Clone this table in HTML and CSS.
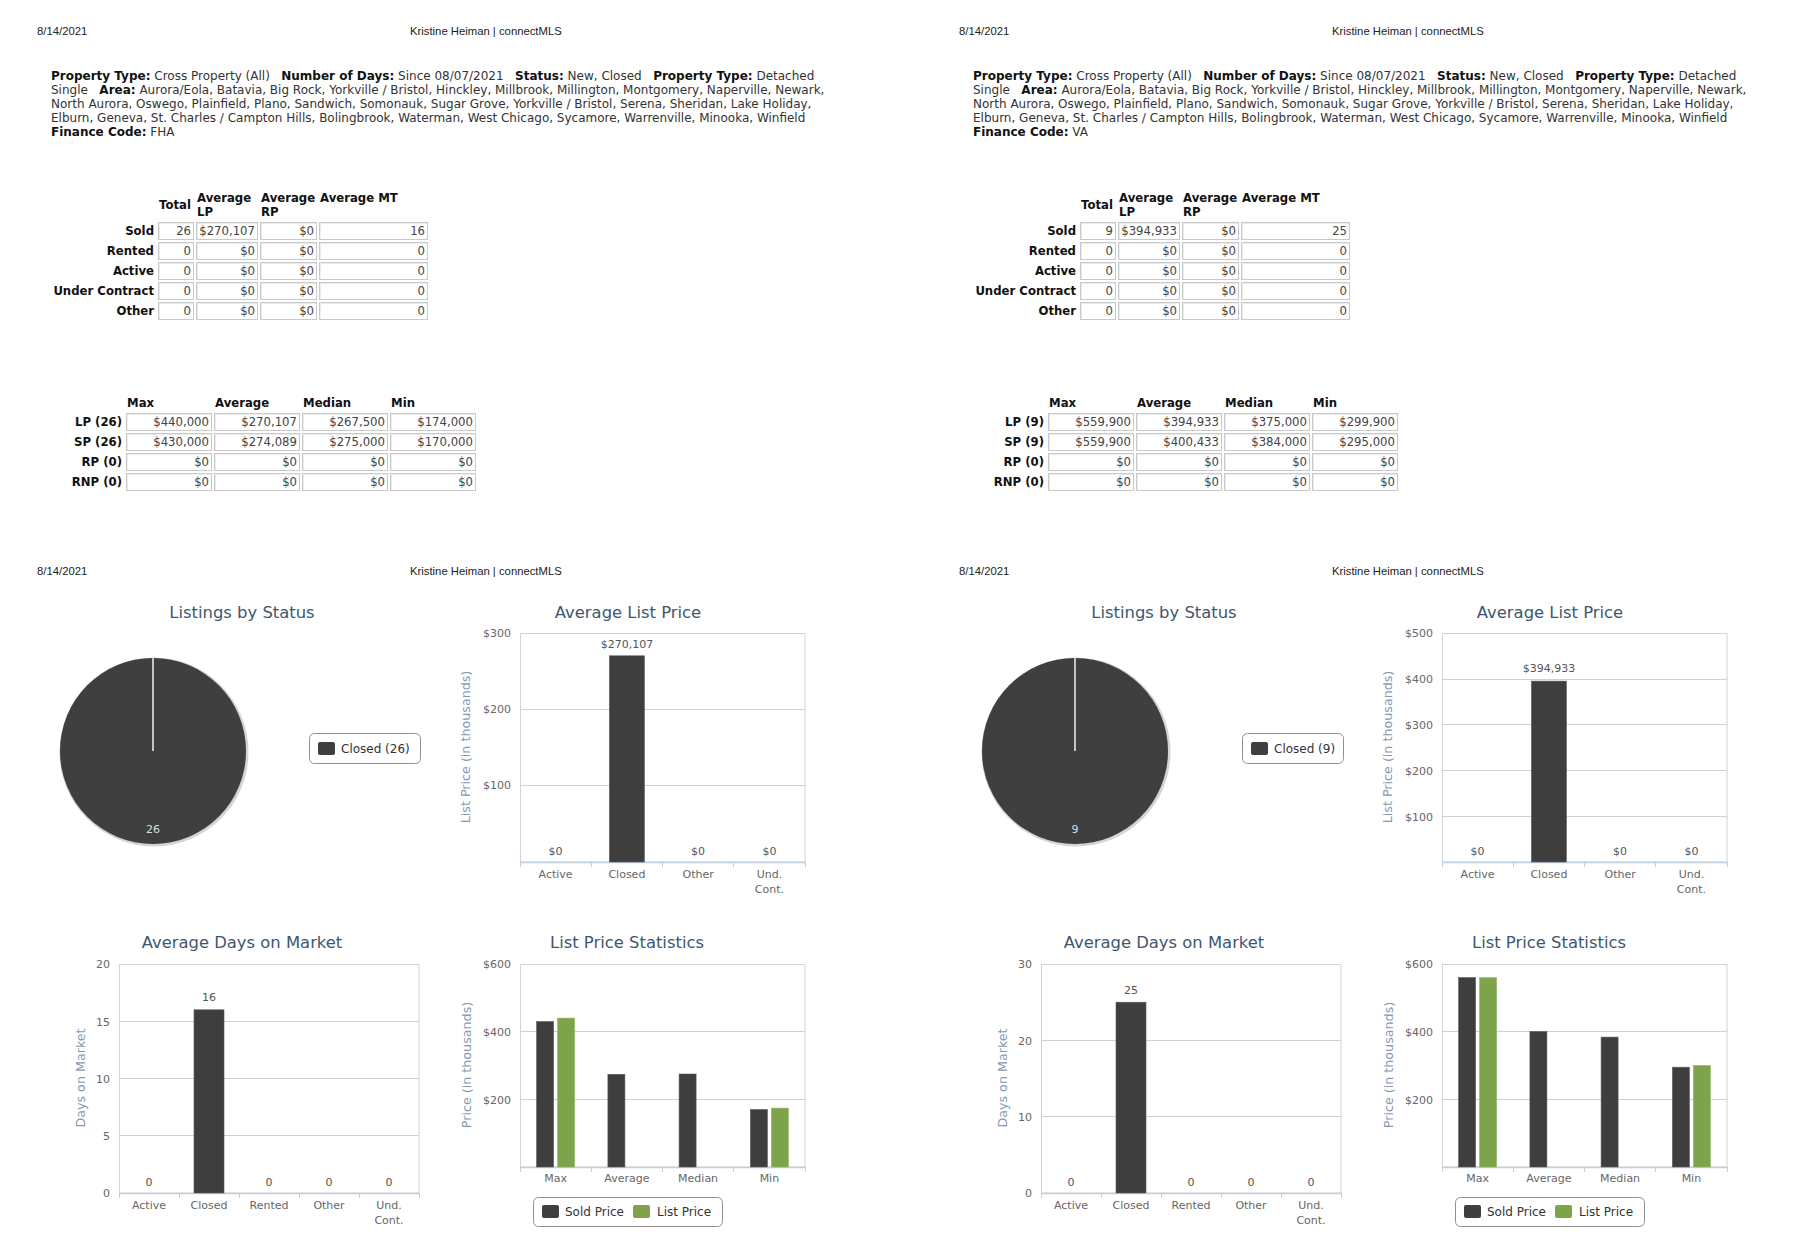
FILE: index.html
```html
<!DOCTYPE html>
<html lang="en">
<head>
<meta charset="utf-8">
<title>connectMLS Market Report</title>
<link rel="stylesheet" href="styles.css">
</head>
<body>
<div class="sheet">

<!-- ============ LEFT : FHA ============ -->
<div class="col">
  <section class="page report">
    <div class="hdr"><span class="date">8/14/2021</span><span class="who">Kristine Heiman | connectMLS</span></div>
    <p class="crit">
      <span class="ln"><b>Property Type:</b> Cross Property (All)&nbsp;&nbsp; <b>Number of Days:</b> Since 08/07/2021&nbsp;&nbsp; <b>Status:</b> New, Closed&nbsp;&nbsp; <b>Property Type:</b> Detached</span>
      <span class="ln">Single&nbsp;&nbsp; <b>Area:</b> Aurora/Eola, Batavia, Big Rock, Yorkville / Bristol, Hinckley, Millbrook, Millington, Montgomery, Naperville, Newark,</span>
      <span class="ln">North Aurora, Oswego, Plainfield, Plano, Sandwich, Somonauk, Sugar Grove, Yorkville / Bristol, Serena, Sheridan, Lake Holiday,</span>
      <span class="ln">Elburn, Geneva, St. Charles / Campton Hills, Bolingbrook, Waterman, West Chicago, Sycamore, Warrenville, Minooka, Winfield</span>
      <span class="ln"><b>Finance Code:</b> FHA</span>
    </p>
    <table class="t1">
      <thead><tr><th class="c-lab"></th><th class="c-tot">Total</th><th class="c-lp">Average LP</th><th class="c-rp">Average RP</th><th class="c-mt">Average MT</th></tr></thead>
      <tbody>
        <tr><th>Sold</th><td>26</td><td>$270,107</td><td>$0</td><td>16</td></tr>
        <tr><th>Rented</th><td>0</td><td>$0</td><td>$0</td><td>0</td></tr>
        <tr><th>Active</th><td>0</td><td>$0</td><td>$0</td><td>0</td></tr>
        <tr><th>Under Contract</th><td>0</td><td>$0</td><td>$0</td><td>0</td></tr>
        <tr><th>Other</th><td>0</td><td>$0</td><td>$0</td><td>0</td></tr>
      </tbody>
    </table>
    <table class="t2">
      <thead><tr><th class="c-lab2"></th><th class="c-p">Max</th><th class="c-p">Average</th><th class="c-p">Median</th><th class="c-p">Min</th></tr></thead>
      <tbody>
        <tr><th>LP (26)</th><td>$440,000</td><td>$270,107</td><td>$267,500</td><td>$174,000</td></tr>
        <tr><th>SP (26)</th><td>$430,000</td><td>$274,089</td><td>$275,000</td><td>$170,000</td></tr>
        <tr><th>RP (0)</th><td>$0</td><td>$0</td><td>$0</td><td>$0</td></tr>
        <tr><th>RNP (0)</th><td>$0</td><td>$0</td><td>$0</td><td>$0</td></tr>
      </tbody>
    </table>
  </section>

  <section class="page charts">
    <div class="hdr"><span class="date">8/14/2021</span><span class="who">Kristine Heiman | connectMLS</span></div>
    <div class="cgrid">
      <!-- Listings by Status -->
      <svg class="chart" width="420" height="330" viewBox="0 0 420 330">
        <text class="ctitle" x="212" y="28">Listings by Status</text>
        <circle class="pieshadow" cx="124" cy="162" r="94.5"/>
        <circle class="pie" cx="123" cy="161" r="93"/>
        <line class="seam" x1="123" y1="68" x2="123" y2="161"/>
        <text class="pielbl" x="123" y="243">26</text>
        <rect class="legend" x="279.5" y="143.5" width="111" height="30" rx="5"/>
        <rect class="sw" x="288" y="152" width="17" height="13" rx="2"/>
        <text class="ltext" x="311" y="163">Closed (26)</text>
      </svg>
      <!-- Average List Price -->
      <svg class="chart" width="420" height="330" viewBox="0 0 420 330">
        <text class="ctitle" x="178" y="28">Average List Price</text>
        <line class="grid" x1="70" y1="119.5" x2="355" y2="119.5"/>
        <line class="grid" x1="70" y1="195.5" x2="355" y2="195.5"/>
        <rect class="pborder" x="70.5" y="43.5" width="284.5" height="228.5"/>
        <line class="xaxis" x1="70" y1="272.5" x2="356" y2="272.5"/>
        <path class="ticks" d="M70.5 272v5M141.5 272v5M212.5 272v5M283.5 272v5M355.5 272v5"/>
        <text class="ylab" x="61" y="47">$300</text>
        <text class="ylab" x="61" y="123">$200</text>
        <text class="ylab" x="61" y="199">$100</text>
        <text class="atitle" transform="translate(20 157) rotate(-90)">List Price (in thousands)</text>
        <rect class="bar" x="159.4" y="65.8" width="35" height="206.2"/>
        <text class="dlab" x="105.6" y="265">$0</text>
        <text class="dlab" x="177" y="58">$270,107</text>
        <text class="dlab" x="248.1" y="265">$0</text>
        <text class="dlab" x="319.4" y="265">$0</text>
        <text class="xlab" x="105.6" y="288">Active</text>
        <text class="xlab" x="176.9" y="288">Closed</text>
        <text class="xlab" x="248.1" y="288">Other</text>
        <text class="xlab" x="319.4" y="288">Und.</text>
        <text class="xlab" x="319.4" y="303">Cont.</text>
      </svg>
      <!-- Average Days on Market -->
      <svg class="chart" width="420" height="330" viewBox="0 0 420 330">
        <text class="ctitle" x="212" y="28">Average Days on Market</text>
        <line class="grid" x1="89" y1="101.5" x2="389" y2="101.5"/>
        <line class="grid" x1="89" y1="158.5" x2="389" y2="158.5"/>
        <line class="grid" x1="89" y1="215.5" x2="389" y2="215.5"/>
        <rect class="pborder" x="89.5" y="44.5" width="299.5" height="228.5"/>
        <line class="xaxis" x1="89" y1="273.5" x2="390" y2="273.5"/>
        <path class="ticks" d="M89.5 273v5M149.5 273v5M209.5 273v5M269.5 273v5M329.5 273v5M389.5 273v5"/>
        <text class="ylab" x="80" y="48">20</text>
        <text class="ylab" x="80" y="105.5">15</text>
        <text class="ylab" x="80" y="162.5">10</text>
        <text class="ylab" x="80" y="219.5">5</text>
        <text class="ylab" x="80" y="277">0</text>
        <text class="atitle" transform="translate(55 158) rotate(-90)">Days on Market</text>
        <rect class="bar" x="164" y="89.8" width="30" height="183.2"/>
        <text class="dlab" x="119" y="266">0</text>
        <text class="dlab" x="179" y="81">16</text>
        <text class="dlab" x="239" y="266">0</text>
        <text class="dlab" x="299" y="266">0</text>
        <text class="dlab" x="359" y="266">0</text>
        <text class="xlab" x="119" y="289">Active</text>
        <text class="xlab" x="179" y="289">Closed</text>
        <text class="xlab" x="239" y="289">Rented</text>
        <text class="xlab" x="299" y="289">Other</text>
        <text class="xlab" x="359" y="289">Und.</text>
        <text class="xlab" x="359" y="304">Cont.</text>
      </svg>
      <!-- List Price Statistics -->
      <svg class="chart" width="420" height="330" viewBox="0 0 420 330">
        <text class="ctitle" x="177" y="28">List Price Statistics</text>
        <line class="grid" x1="70" y1="111.5" x2="355" y2="111.5"/>
        <line class="grid" x1="70" y1="179.5" x2="355" y2="179.5"/>
        <rect class="pborder" x="70.5" y="44.5" width="284.5" height="202.5"/>
        <line class="xaxis" x1="70" y1="247.5" x2="356" y2="247.5"/>
        <path class="ticks" d="M70.5 247v5M141.5 247v5M212.5 247v5M283.5 247v5M355.5 247v5"/>
        <text class="ylab" x="61" y="48">$600</text>
        <text class="ylab" x="61" y="115.5">$400</text>
        <text class="ylab" x="61" y="183.5">$200</text>
        <text class="atitle" transform="translate(21 145) rotate(-90)">Price (in thousands)</text>
        <rect class="bar" x="86.6" y="101.5" width="17" height="145.5"/>
        <rect class="bar green" x="107.6" y="98.1" width="17" height="148.9"/>
        <rect class="bar" x="157.9" y="154.3" width="17" height="92.7"/>
        <rect class="bar" x="229.1" y="154" width="17" height="93"/>
        <rect class="bar" x="300.4" y="189.5" width="17" height="57.5"/>
        <rect class="bar green" x="321.4" y="188.1" width="17" height="58.9"/>
        <text class="xlab" x="105.6" y="262">Max</text>
        <text class="xlab" x="176.9" y="262">Average</text>
        <text class="xlab" x="248.1" y="262">Median</text>
        <text class="xlab" x="319.4" y="262">Min</text>
        <rect class="legend" x="83.5" y="277.5" width="189" height="29" rx="5"/>
        <rect class="sw" x="92" y="285" width="17" height="13" rx="2"/>
        <text class="ltext" x="115" y="296">Sold Price</text>
        <rect class="sw green" x="183" y="285" width="17" height="13" rx="2"/>
        <text class="ltext" x="207" y="296">List Price</text>
      </svg>
    </div>
  </section>
</div>

<!-- ============ RIGHT : VA ============ -->
<div class="col">
  <section class="page report">
    <div class="hdr"><span class="date">8/14/2021</span><span class="who">Kristine Heiman | connectMLS</span></div>
    <p class="crit">
      <span class="ln"><b>Property Type:</b> Cross Property (All)&nbsp;&nbsp; <b>Number of Days:</b> Since 08/07/2021&nbsp;&nbsp; <b>Status:</b> New, Closed&nbsp;&nbsp; <b>Property Type:</b> Detached</span>
      <span class="ln">Single&nbsp;&nbsp; <b>Area:</b> Aurora/Eola, Batavia, Big Rock, Yorkville / Bristol, Hinckley, Millbrook, Millington, Montgomery, Naperville, Newark,</span>
      <span class="ln">North Aurora, Oswego, Plainfield, Plano, Sandwich, Somonauk, Sugar Grove, Yorkville / Bristol, Serena, Sheridan, Lake Holiday,</span>
      <span class="ln">Elburn, Geneva, St. Charles / Campton Hills, Bolingbrook, Waterman, West Chicago, Sycamore, Warrenville, Minooka, Winfield</span>
      <span class="ln"><b>Finance Code:</b> VA</span>
    </p>
    <table class="t1">
      <thead><tr><th class="c-lab"></th><th class="c-tot">Total</th><th class="c-lp">Average LP</th><th class="c-rp">Average RP</th><th class="c-mt">Average MT</th></tr></thead>
      <tbody>
        <tr><th>Sold</th><td>9</td><td>$394,933</td><td>$0</td><td>25</td></tr>
        <tr><th>Rented</th><td>0</td><td>$0</td><td>$0</td><td>0</td></tr>
        <tr><th>Active</th><td>0</td><td>$0</td><td>$0</td><td>0</td></tr>
        <tr><th>Under Contract</th><td>0</td><td>$0</td><td>$0</td><td>0</td></tr>
        <tr><th>Other</th><td>0</td><td>$0</td><td>$0</td><td>0</td></tr>
      </tbody>
    </table>
    <table class="t2">
      <thead><tr><th class="c-lab2"></th><th class="c-p">Max</th><th class="c-p">Average</th><th class="c-p">Median</th><th class="c-p">Min</th></tr></thead>
      <tbody>
        <tr><th>LP (9)</th><td>$559,900</td><td>$394,933</td><td>$375,000</td><td>$299,900</td></tr>
        <tr><th>SP (9)</th><td>$559,900</td><td>$400,433</td><td>$384,000</td><td>$295,000</td></tr>
        <tr><th>RP (0)</th><td>$0</td><td>$0</td><td>$0</td><td>$0</td></tr>
        <tr><th>RNP (0)</th><td>$0</td><td>$0</td><td>$0</td><td>$0</td></tr>
      </tbody>
    </table>
  </section>

  <section class="page charts">
    <div class="hdr"><span class="date">8/14/2021</span><span class="who">Kristine Heiman | connectMLS</span></div>
    <div class="cgrid">
      <!-- Listings by Status -->
      <svg class="chart" width="420" height="330" viewBox="0 0 420 330">
        <text class="ctitle" x="212" y="28">Listings by Status</text>
        <circle class="pieshadow" cx="124" cy="162" r="94.5"/>
        <circle class="pie" cx="123" cy="161" r="93"/>
        <line class="seam" x1="123" y1="68" x2="123" y2="161"/>
        <text class="pielbl" x="123" y="243">9</text>
        <rect class="legend" x="290.5" y="143.5" width="101" height="30" rx="5"/>
        <rect class="sw" x="299" y="152" width="17" height="13" rx="2"/>
        <text class="ltext" x="322" y="163">Closed (9)</text>
      </svg>
      <!-- Average List Price -->
      <svg class="chart" width="420" height="330" viewBox="0 0 420 330">
        <text class="ctitle" x="178" y="28">Average List Price</text>
        <line class="grid" x1="70" y1="89.5" x2="355" y2="89.5"/>
        <line class="grid" x1="70" y1="134.5" x2="355" y2="134.5"/>
        <line class="grid" x1="70" y1="180.5" x2="355" y2="180.5"/>
        <line class="grid" x1="70" y1="226.5" x2="355" y2="226.5"/>
        <rect class="pborder" x="70.5" y="43.5" width="284.5" height="228.5"/>
        <line class="xaxis" x1="70" y1="272.5" x2="356" y2="272.5"/>
        <path class="ticks" d="M70.5 272v5M141.5 272v5M212.5 272v5M283.5 272v5M355.5 272v5"/>
        <text class="ylab" x="61" y="47">$500</text>
        <text class="ylab" x="61" y="93">$400</text>
        <text class="ylab" x="61" y="138.5">$300</text>
        <text class="ylab" x="61" y="184.5">$200</text>
        <text class="ylab" x="61" y="230.5">$100</text>
        <text class="atitle" transform="translate(20 157) rotate(-90)">List Price (in thousands)</text>
        <rect class="bar" x="159.4" y="91.1" width="35" height="180.9"/>
        <text class="dlab" x="105.6" y="265">$0</text>
        <text class="dlab" x="177" y="82">$394,933</text>
        <text class="dlab" x="248.1" y="265">$0</text>
        <text class="dlab" x="319.4" y="265">$0</text>
        <text class="xlab" x="105.6" y="288">Active</text>
        <text class="xlab" x="176.9" y="288">Closed</text>
        <text class="xlab" x="248.1" y="288">Other</text>
        <text class="xlab" x="319.4" y="288">Und.</text>
        <text class="xlab" x="319.4" y="303">Cont.</text>
      </svg>
      <!-- Average Days on Market -->
      <svg class="chart" width="420" height="330" viewBox="0 0 420 330">
        <text class="ctitle" x="212" y="28">Average Days on Market</text>
        <line class="grid" x1="89" y1="120.5" x2="389" y2="120.5"/>
        <line class="grid" x1="89" y1="196.5" x2="389" y2="196.5"/>
        <rect class="pborder" x="89.5" y="44.5" width="299.5" height="228.5"/>
        <line class="xaxis" x1="89" y1="273.5" x2="390" y2="273.5"/>
        <path class="ticks" d="M89.5 273v5M149.5 273v5M209.5 273v5M269.5 273v5M329.5 273v5M389.5 273v5"/>
        <text class="ylab" x="80" y="48">30</text>
        <text class="ylab" x="80" y="124.5">20</text>
        <text class="ylab" x="80" y="200.5">10</text>
        <text class="ylab" x="80" y="277">0</text>
        <text class="atitle" transform="translate(55 158) rotate(-90)">Days on Market</text>
        <rect class="bar" x="164" y="82.2" width="30" height="190.8"/>
        <text class="dlab" x="119" y="266">0</text>
        <text class="dlab" x="179" y="74">25</text>
        <text class="dlab" x="239" y="266">0</text>
        <text class="dlab" x="299" y="266">0</text>
        <text class="dlab" x="359" y="266">0</text>
        <text class="xlab" x="119" y="289">Active</text>
        <text class="xlab" x="179" y="289">Closed</text>
        <text class="xlab" x="239" y="289">Rented</text>
        <text class="xlab" x="299" y="289">Other</text>
        <text class="xlab" x="359" y="289">Und.</text>
        <text class="xlab" x="359" y="304">Cont.</text>
      </svg>
      <!-- List Price Statistics -->
      <svg class="chart" width="420" height="330" viewBox="0 0 420 330">
        <text class="ctitle" x="177" y="28">List Price Statistics</text>
        <line class="grid" x1="70" y1="111.5" x2="355" y2="111.5"/>
        <line class="grid" x1="70" y1="179.5" x2="355" y2="179.5"/>
        <rect class="pborder" x="70.5" y="44.5" width="284.5" height="202.5"/>
        <line class="xaxis" x1="70" y1="247.5" x2="356" y2="247.5"/>
        <path class="ticks" d="M70.5 247v5M141.5 247v5M212.5 247v5M283.5 247v5M355.5 247v5"/>
        <text class="ylab" x="61" y="48">$600</text>
        <text class="ylab" x="61" y="115.5">$400</text>
        <text class="ylab" x="61" y="183.5">$200</text>
        <text class="atitle" transform="translate(21 145) rotate(-90)">Price (in thousands)</text>
        <rect class="bar" x="86.6" y="57.6" width="17" height="189.4"/>
        <rect class="bar green" x="107.6" y="57.6" width="17" height="189.4"/>
        <rect class="bar" x="157.9" y="111.5" width="17" height="135.5"/>
        <rect class="bar" x="229.1" y="117.1" width="17" height="129.9"/>
        <rect class="bar" x="300.4" y="147.2" width="17" height="99.8"/>
        <rect class="bar green" x="321.4" y="145.5" width="17" height="101.5"/>
        <text class="xlab" x="105.6" y="262">Max</text>
        <text class="xlab" x="176.9" y="262">Average</text>
        <text class="xlab" x="248.1" y="262">Median</text>
        <text class="xlab" x="319.4" y="262">Min</text>
        <rect class="legend" x="83.5" y="277.5" width="189" height="29" rx="5"/>
        <rect class="sw" x="92" y="285" width="17" height="13" rx="2"/>
        <text class="ltext" x="115" y="296">Sold Price</text>
        <rect class="sw green" x="183" y="285" width="17" height="13" rx="2"/>
        <text class="ltext" x="207" y="296">List Price</text>
      </svg>
    </div>
  </section>
</div>

</div>
</body>
</html>
```

FILE: styles.css
```css
html, body {
  margin: 0;
  padding: 0;
  background: #ffffff;
}
body {
  width: 1800px;
  height: 1260px;
  overflow: hidden;
  color: #222;
}

.sheet {
  display: grid;
  grid-template-columns: 922px 878px;
}
.col {
  display: flex;
  flex-direction: column;
}
.page {
  box-sizing: border-box;
  padding-top: 24px;
}
.report { height: 540px; }
.charts { height: 720px; }

/* page header */
.hdr {
  display: flex;
  padding-left: 37px;
  height: 14px;
  font: 11.3px/14px "Liberation Sans", Arial, sans-serif;
  color: #222;
}
.hdr .date { width: 373px; }

/* search criteria */
.crit {
  margin: 31px 0 0 51px;
  font: 12px/14px "DejaVu Sans", Verdana, sans-serif;
  color: #333;
}
.crit .ln {
  display: block;
  white-space: nowrap;
}
.crit b { color: #111; }

/* tables */
table {
  border-collapse: separate;
  border-spacing: 2px;
  font: 11.7px "DejaVu Sans", Verdana, sans-serif;
}
.t1 { margin: 49px 0 0 50px; }
.t2 { margin: 71px 0 0 64px; }

th {
  font-weight: bold;
  color: #111;
  padding: 0;
  box-sizing: border-box;
}
thead th {
  text-align: left;
  vertical-align: middle;
  line-height: 14px;
  padding-left: 1px;
}
.t1 thead th { height: 30px; }
.t2 thead th { height: 16px; }
.t1 thead th.c-mt {
  vertical-align: top;
  padding-top: 1px;
}

.c-lab { width: 104px; }
.c-tot { width: 36px; }
.c-lp { width: 62px; }
.c-rp { width: 57px; }
.c-mt { width: 109px; }
.c-lab2 { width: 58px; }
.c-p { width: 86px; }

tbody th {
  text-align: right;
  padding-right: 2px;
  line-height: 16px;
  white-space: nowrap;
}
td {
  box-sizing: border-box;
  height: 18px;
  border: 1px solid #c9c9c9;
  box-shadow: inset 1px 1px 0 #ececec;
  padding: 0 2px;
  text-align: right;
  line-height: 16px;
  color: #444;
  white-space: nowrap;
}

/* charts */
.cgrid {
  display: grid;
  grid-template-columns: 420px 420px;
  grid-template-rows: 330px 330px;
  margin: 12px 0 0 30px;
}
.chart {
  display: block;
  width: 420px;
  height: 330px;
  font-family: "DejaVu Sans", Verdana, sans-serif;
}
.ctitle {
  font-size: 16.4px;
  fill: #3e576f;
  text-anchor: middle;
}
.ylab {
  font-size: 11px;
  fill: #666;
  text-anchor: end;
}
.xlab {
  font-size: 11px;
  fill: #666;
  text-anchor: middle;
}
.dlab {
  font-size: 11px;
  fill: #555;
  text-anchor: middle;
}
.atitle {
  font-size: 12.7px;
  fill: #8499b2;
  text-anchor: middle;
}
.grid {
  stroke: #d0d0d0;
  stroke-width: 1;
}
.pborder {
  fill: none;
  stroke: #cfd4da;
  stroke-width: 1;
}
.xaxis {
  stroke: #c0d0e0;
  stroke-width: 1.5;
}
.ticks {
  stroke: #c0d0e0;
  stroke-width: 1;
  fill: none;
}
.bar {
  fill: #3e3e3e;
  stroke: #5a5a5a;
  stroke-width: 0.6;
}
.bar.green {
  fill: #7ea44b;
  stroke: #93b564;
}
.pie { fill: #3f3f3f; }
.pieshadow { fill: #d4d4d4; }
.seam {
  stroke: #f2f2f2;
  stroke-width: 1.5;
}
.pielbl {
  font-size: 11px;
  fill: #dddddd;
  text-anchor: middle;
}
.legend {
  fill: #ffffff;
  stroke: #909090;
  stroke-width: 1;
}
.sw { fill: #3f3f3f; }
.sw.green { fill: #7ea44b; }
.ltext {
  font-size: 12px;
  fill: #333;
}
```
